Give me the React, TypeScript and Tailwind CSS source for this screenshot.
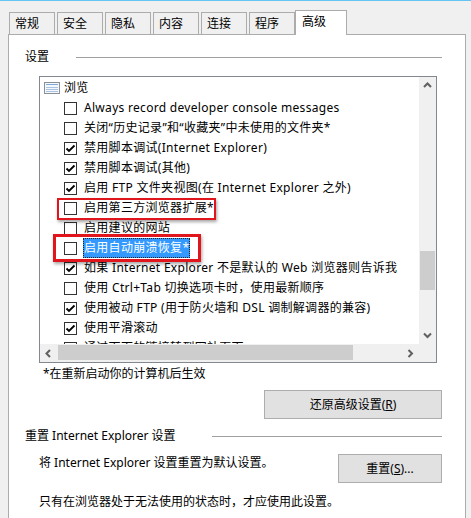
import React from "react";

const rows = [
  { t: "Always record developer console messages", c: false },
  { t: "关闭“历史记录”和“收藏夹”中未使用的文件夹*", c: false },
  { t: "禁用脚本调试(Internet Explorer)", c: true },
  { t: "禁用脚本调试(其他)", c: true },
  { t: "启用 FTP 文件夹视图(在 Internet Explorer 之外)", c: true },
  { t: "启用第三方浏览器扩展*", c: false },
  { t: "启用建议的网站", c: false },
  { t: "启用自动崩溃恢复*", c: false, sel: true },
  { t: "如果 Internet Explorer 不是默认的 Web 浏览器则告诉我", c: true },
  { t: "使用 Ctrl+Tab 切换选项卡时，使用最新顺序", c: false },
  { t: "使用被动 FTP (用于防火墙和 DSL 调制解调器的兼容)", c: true },
  { t: "使用平滑滚动", c: true },
  { t: "通过下面的链接转到网站页面", c: true },
];

const tabs = ["常规", "安全", "隐私", "内容", "连接", "程序"];

function Checkbox({ checked }: { checked: boolean }) {
  return (
    <div className="w-[13px] h-[13px] border border-[#333333] bg-white shrink-0 flex items-center justify-center">
      {checked && (
        <svg width="11" height="11" viewBox="0 0 11 11">
          <path d="M1.5 5.5 L4 8 L9.5 2.5" fill="none" stroke="#000" strokeWidth="1.8" />
        </svg>
      )}
    </div>
  );
}

function Arrow({ dir }: { dir: "up" | "down" | "left" | "right" }) {
  const d = {
    up: "M1 5 L4.5 1.5 L8 5",
    down: "M1 1.5 L4.5 5 L8 1.5",
    left: "M5 1 L1.5 4.5 L5 8",
    right: "M1.5 1 L5 4.5 L1.5 8",
  }[dir];
  const vertical = dir === "up" || dir === "down";
  return (
    <svg width={vertical ? 9 : 7} height={vertical ? 7 : 9} viewBox={vertical ? "0 0 9 7" : "0 0 7 9"}>
      <path d={d} fill="none" stroke="#606060" strokeWidth="2" />
    </svg>
  );
}

function GroupHeader({ label, labelWidth }: { label: string; labelWidth: string }) {
  return (
    <div className="flex items-center h-[16px] pl-[16px] pr-[23px]">
      <span className={`whitespace-nowrap shrink-0 ${labelWidth}`}>{label}</span>
      <div className="flex-1 h-px bg-[#a0a0a0]" />
    </div>
  );
}

export default function App() {
  return (
    <div className="relative w-[471px] h-[518px] overflow-hidden bg-[#f0f0f0] border-t border-[#66c4f2] font-['Noto_Sans','Noto_Sans_CJK_SC',sans-serif] text-[12px] text-black leading-[16px]">
      {/* Tabs */}
      <div className="relative z-10 flex items-end pl-[9px] mt-[9px] -mb-px">
        {tabs.map((t) => (
          <div
            key={t}
            className="w-[46px] h-[22px] mb-px mr-[2px] border border-b-0 border-[#acacac] bg-[#f0f0f0] pl-[5px] flex items-center"
          >
            {t}
          </div>
        ))}
        <div className="w-[52px] h-[25px] -ml-[2px] border border-b-0 border-[#acacac] bg-white pl-[6px] pb-[2px] flex items-center">
          高级
        </div>
      </div>

      {/* Panel */}
      <div className="ml-[8px] w-[458px] h-[500px] bg-white border border-[#acacac] pt-[14px]">
        <GroupHeader label="设置" labelWidth="w-[51px]" />

        {/* List box */}
        <div className="ml-[30px] mt-[11px] w-[398px] h-[287px] border border-[#828790] flex flex-col">
          <div className="flex h-[267px]">
            <div className="flex-1 overflow-hidden bg-white pt-px tracking-[0.3px]">
              <div className="flex items-center h-[20px] pl-[4px] whitespace-nowrap">
                <svg width="16" height="12" viewBox="0 0 16 12" className="mr-[4px]">
                  <rect x="0.5" y="0.5" width="15" height="11" fill="#f4f7fb" stroke="#8a8f96" />
                  <rect x="2" y="2" width="12" height="1" fill="#7fa9d9" />
                  <rect x="2" y="5" width="12" height="1" fill="#a9c4e3" />
                  <rect x="2" y="7" width="12" height="1" fill="#a9c4e3" />
                  <rect x="2" y="9" width="12" height="1" fill="#a9c4e3" />
                </svg>
                <span>浏览</span>
              </div>
              {rows.map((r) => (
                <div key={r.t} className="flex items-center h-[20px] pl-[24px] whitespace-nowrap">
                  <Checkbox checked={r.c} />
                  {r.sel ? (
                    <span className="ml-[6px] h-[20px] flex items-center px-[1px] bg-[#3399ff] text-white outline-1 outline-dotted outline-[#222] -outline-offset-1">
                      {r.t}
                    </span>
                  ) : (
                    <span className="ml-[7px]">{r.t}</span>
                  )}
                </div>
              ))}
            </div>
            {/* Vertical scrollbar */}
            <div className="w-[17px] bg-[#f0f0f0] flex flex-col items-center">
              <div className="h-[17px] flex items-center justify-center">
                <Arrow dir="up" />
              </div>
              <div className="h-[157px]" />
              <div className="w-[15px] h-[39px] bg-[#cdcdcd]" />
              <div className="flex-1" />
              <div className="h-[17px] flex items-center justify-center">
                <Arrow dir="down" />
              </div>
            </div>
          </div>
          {/* Horizontal scrollbar */}
          <div className="flex h-[18px] bg-[#f0f0f0]">
            <div className="w-[17px] flex items-center justify-center">
              <Arrow dir="left" />
            </div>
            <div className="ml-px mt-px w-[295px] h-[15px] bg-[#cdcdcd]" />
            <div className="flex-1" />
            <div className="w-[17px] flex items-center justify-center">
              <Arrow dir="right" />
            </div>
            <div className="w-[17px]" />
          </div>
        </div>

        <div className="pl-[34px] mt-[3px]">*在重新启动你的计算机后生效</div>

        <div className="flex justify-end pr-[23px] mt-[8px]">
          <button className="w-[178px] h-[29px] bg-[#e1e1e1] border border-[#adadad] text-[12px]">
            还原高级设置(<span className="underline">R</span>)
          </button>
        </div>

        <div className="mt-[9px]">
          <GroupHeader label="重置 Internet Explorer 设置" labelWidth="w-[187px]" />
        </div>

        <div className="flex justify-between items-start pl-[30px] pr-[23px] mt-[10px]">
          <div className="mt-[1px]">将 Internet Explorer 设置重置为默认设置。</div>
          <button className="w-[104px] h-[29px] bg-[#e1e1e1] border border-[#adadad] text-[12px]">
            重置(<span className="underline">S</span>)...
          </button>
        </div>

        <div className="pl-[30px] mt-[11px]">只有在浏览器处于无法使用的状态时，才应使用此设置。</div>
      </div>

      {/* Red annotation boxes */}
      <div className="absolute left-[57px] top-[197px] w-[159px] h-[22px] border-2 border-[#e0161c] shadow-[1px_2px_3px_rgba(0,0,0,0.35)]" />
      <div className="absolute left-[53px] top-[233px] w-[148px] h-[28px] border-[3px] border-[#e0161c] shadow-[1px_2px_3px_rgba(0,0,0,0.35)]" />
    </div>
  );
}
